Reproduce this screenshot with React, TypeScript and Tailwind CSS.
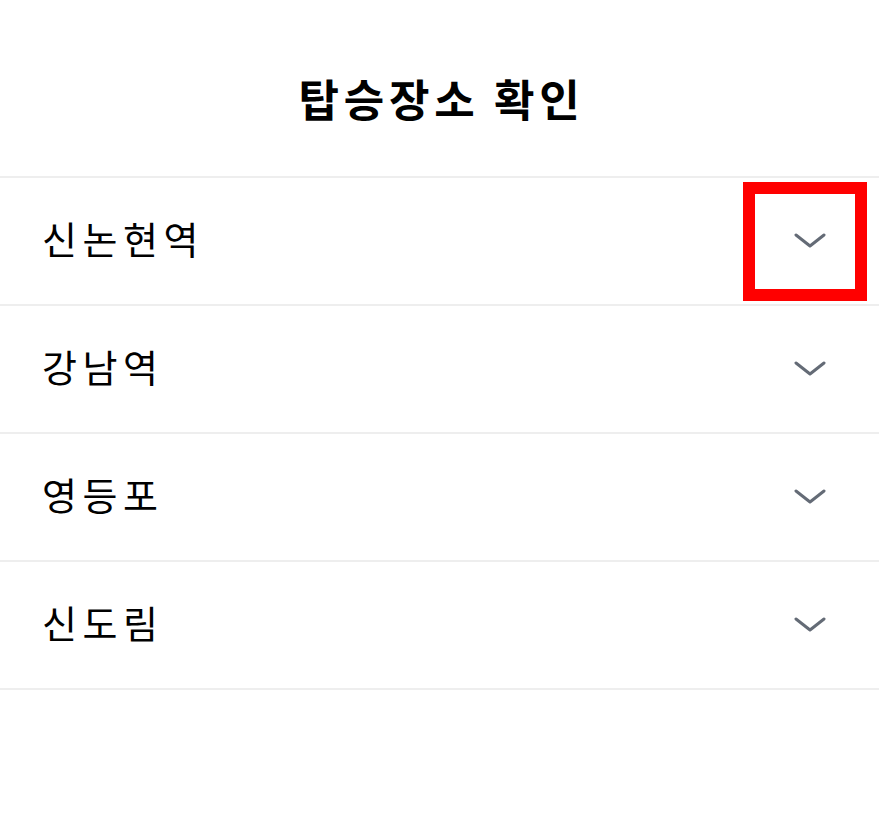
const places = ["신논현역", "강남역", "영등포", "신도림"];

function Chevron() {
  return (
    <svg width="32" height="18" viewBox="0 0 32 18" fill="none" className="text-[#646b76]">
      <polyline points="2,3 16,14 30,3" stroke="currentColor" strokeWidth="3" strokeLinecap="round" strokeLinejoin="round" />
    </svg>
  );
}

export default function App() {
  return (
    <div className="min-h-screen bg-white font-['Noto_Sans_CJK_KR',sans-serif] text-black">
      <header className="flex h-[176px] items-center justify-center pt-[20px]">
        <h1 className="pl-[4px] text-[44px] font-bold leading-none tracking-[4.7px]">탑승장소 확인</h1>
      </header>
      <ul className="border-t-2 border-[#eeeeee]">
        {places.map((name, i) => (
          <li key={name} className="flex h-[128px] items-center justify-between border-b-2 border-[#eeeeee] pl-[42px] pr-[24px]">
            <span className="mb-[6px] text-[38px] leading-none tracking-[5.5px]">{name}</span>
            <button
              type="button"
              className={`flex h-[95px] w-[100px] items-center justify-center pl-[10px] ${
                i === 0 ? "outline-[12px] outline-solid outline-[#ff0000]" : ""
              }`}
            >
              <Chevron />
            </button>
          </li>
        ))}
      </ul>
    </div>
  );
}
